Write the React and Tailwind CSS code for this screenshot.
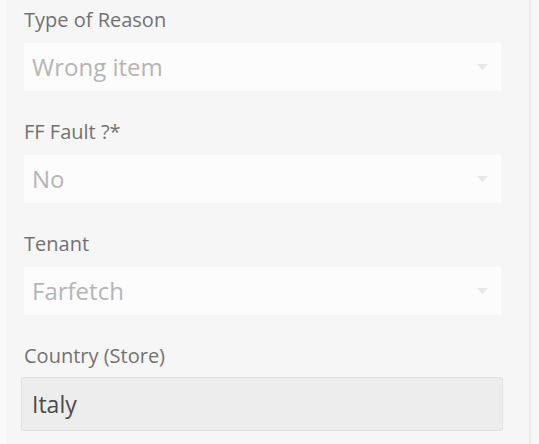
import React from "react";

function Arrow() {
  return (
    <svg width="11" height="6" viewBox="0 0 11 6" className="shrink-0">
      <path d="M0 0 L11 0 L5.5 6 Z" fill="#e6e6e6" />
    </svg>
  );
}

function SelectField({ label, value }) {
  return (
    <div className="flex flex-col">
      <div className="text-[20px] leading-[28px] text-[#727272]">{label}</div>
      <div className="mt-[9px] h-[48px] w-[477px] bg-[#fcfcfc] flex items-center justify-between pl-[8px] pr-[13px]">
        <span className="text-[24px] text-[#b5b5b5]">{value}</span>
        <Arrow />
      </div>
    </div>
  );
}

export default function App() {
  return (
    <div
      className="w-[539px] h-[444px] bg-[#f6f6f6] flex overflow-hidden"
      style={{ fontFamily: '"Open Sans", "Noto Sans", sans-serif' }}
    >
      <div className="w-[6px] bg-[#fafafa]" />
      <div className="w-[523px] pl-[18px] pt-[6px] flex flex-col gap-[27px]">
        <SelectField label="Type of Reason" value="Wrong item" />
        <SelectField label="FF Fault ?*" value="No" />
        <SelectField label="Tenant" value="Farfetch" />
        <div className="flex flex-col">
          <div className="text-[20px] leading-[28px] text-[#727272]">Country (Store)</div>
          <div className="mt-[7px] -ml-[3px] h-[54px] w-[482px] bg-[#ededed] border border-[#e0e0e0] rounded-[3px] flex items-center pl-[10px]">
            <span className="text-[23px] text-[#4a4a4a]">Italy</span>
          </div>
        </div>
      </div>
      <div className="w-[2px] bg-[#ebebeb]" />
      <div className="flex-1 bg-[#f7f7f7]" />
    </div>
  );
}
